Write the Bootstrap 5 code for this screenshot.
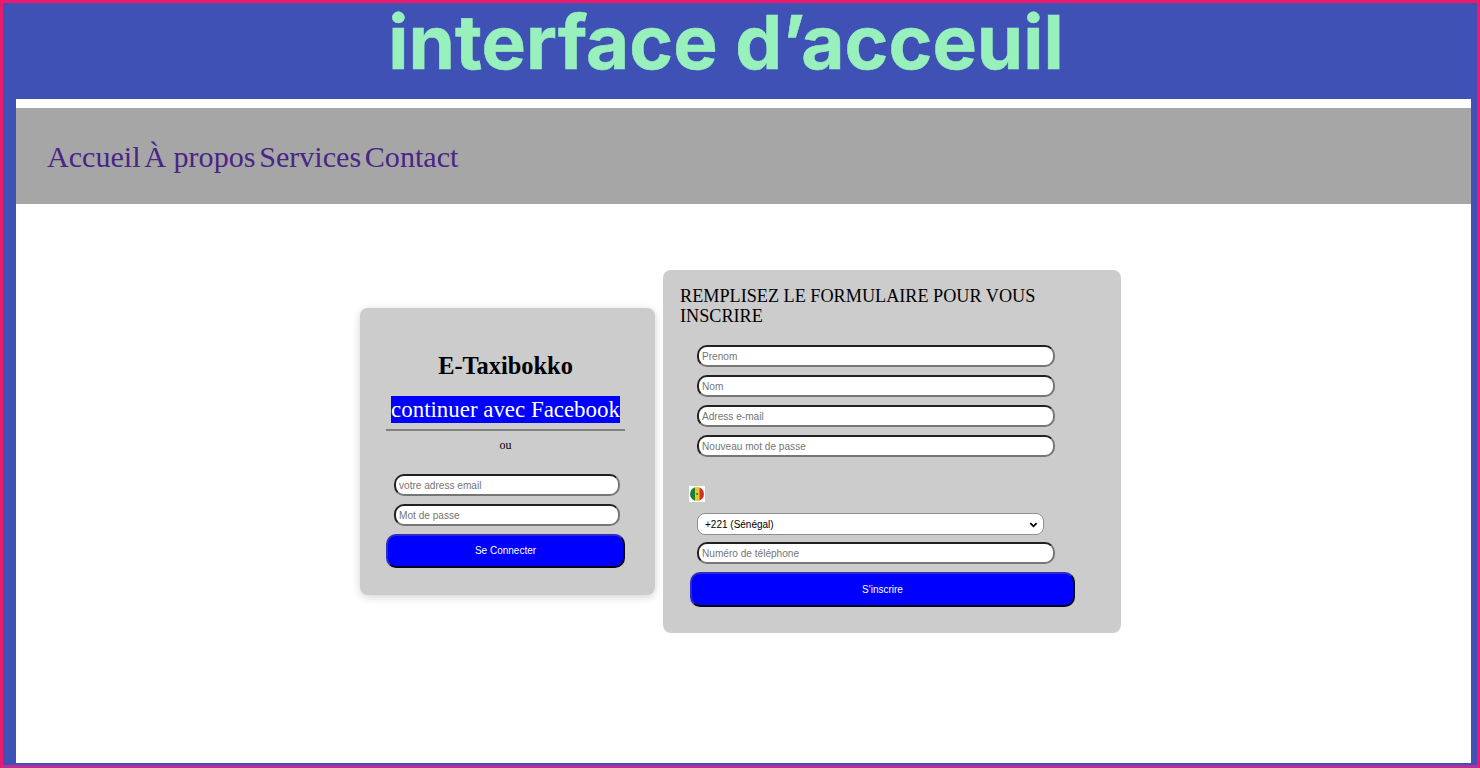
<!DOCTYPE html>
<html lang="fr">
<head>
<meta charset="utf-8">
<title>interface d'acceuil</title>
<link href="https://cdn.jsdelivr.net/npm/bootstrap@5.3.0/dist/css/bootstrap.min.css" rel="stylesheet">
<style>
html,body{height:100%;overflow:hidden}
body{background:#3f51b5;font-family:"Liberation Serif",serif;color:#000}
.frame{height:768px;border:3px solid #ec1a6c;border-bottom-color:#b92f93;padding-left:13px;padding-right:6px;padding-bottom:2px;background:#3f51b5;display:flex;flex-direction:column}
.frame-title{height:96px;margin:0 0 0 -13px;padding-right:22px;padding-top:1px;text-align:center;font-family:Inter,sans-serif;font-weight:700;font-size:74.6px;line-height:90px;margin-top:-7px;height:103px;color:#98f0bd;-webkit-text-stroke:.5px #98f0bd}
.page-area{flex:1;background:#fff;padding-top:9px;display:flex;flex-direction:column}
.menu-bar{height:96px;background:#a6a6a6;padding-left:31px;padding-top:2px;gap:3.7px}
.menu-bar a{font-size:30.1px;color:#4a2585;text-decoration:none;padding:0;line-height:1}
.stage{flex:1;padding-right:6px;padding-bottom:64px;gap:8px}
.panel{background:#ccc;border-radius:8px}
.panel-login{width:295px;height:287px;padding:42px 30px 0 26px;box-shadow:0 2px 8px rgba(0,0,0,.18);flex:none}
.panel-signup{width:458px;height:363px;padding:16px 17px 0 17px;flex:none}
.brand{font-size:24.4px;font-weight:700;line-height:32px;margin:0 0 14px;text-align:center}
.fb-line{text-align:center;font-size:22.9px;line-height:27px;color:#fff;margin:0 -5px;white-space:nowrap}
.fb-line span{background:#00f;padding:1px 0}
.sep{border:0;border-top:2px solid #808080;opacity:1;margin:6px 0 6px}
.or-line{font-size:12px;line-height:16px;text-align:center;margin:0 0 21px}
.signup-title{font-size:18.2px;line-height:20px;font-weight:400;margin:0 0 19px;width:400px}
.field{display:block;height:22px;border:2px inset #767676;border-radius:10px;background:#fff;font-family:"Liberation Sans",sans-serif;font-size:10.1px;padding:0 3px;margin-bottom:8px;outline:0}
.field::placeholder{color:#757575;opacity:1}
.panel-login .field{width:226px;margin-left:8px}
.panel-signup .field{width:358px;margin-left:17px}
.go{display:block;height:34px;border:2px outset #1a1a70;border-radius:10px;background:#00f;color:#fff;font-family:"Liberation Sans",sans-serif;font-size:10px;padding:0 0 1px}
.panel-login .go{width:239px}
.panel-signup .go{width:385px;height:35px;margin-left:10px}
.flag-box{display:block;width:16px;height:16px;margin:29px 0 11px 9px}
.code-select{display:block;width:347px;height:22px;margin:0 0 7px 17px;border:1px solid #8f8f8f;border-radius:8px;appearance:none;background:#fff url("data:image/svg+xml,%3Csvg xmlns='http://www.w3.org/2000/svg' viewBox='0 0 10 10'%3E%3Cpath d='M1.5 3.5 5 7l3.5-3.5' fill='none' stroke='%23000' stroke-width='2'/%3E%3C/svg%3E") no-repeat right 5px center/9px 9px;font-family:"Liberation Sans",sans-serif;font-size:10px;padding:0 0 0 7px;color:#000}
</style>
</head>
<body>
<div class="frame">
  <h1 class="frame-title">interface d’acceuil</h1>
  <div class="page-area">
    <nav class="menu-bar d-flex align-items-center">
      <a href="#">Accueil</a><a href="#">À propos</a><a href="#">Services</a><a href="#">Contact</a>
    </nav>
    <main class="stage d-flex justify-content-center align-items-center">
      <section class="panel panel-login">
        <h2 class="brand">E-Taxibokko</h2>
        <p class="fb-line"><span>continuer avec Facebook</span></p>
        <hr class="sep">
        <p class="or-line">ou</p>
        <input class="field" type="email" placeholder="votre adress email">
        <input class="field" type="password" placeholder="Mot de passe">
        <button class="go" type="button">Se Connecter</button>
      </section>
      <section class="panel panel-signup">
        <h2 class="signup-title">REMPLISEZ LE FORMULAIRE POUR VOUS INSCRIRE</h2>
        <input class="field" type="text" placeholder="Prenom">
        <input class="field" type="text" placeholder="Nom">
        <input class="field" type="email" placeholder="Adress e-mail">
        <input class="field" type="password" placeholder="Nouveau mot de passe">
        <svg class="flag-box" viewBox="0 0 16 16" role="img" aria-label="Sénégal">
          <rect width="16" height="16" fill="#fff"/>
          <clipPath id="rond"><circle cx="8" cy="8" r="7"/></clipPath>
          <g clip-path="url(#rond)">
            <rect x="1" y="1" width="5" height="14" fill="#1f7d3a"/>
            <rect x="6" y="1" width="4.4" height="14" fill="#eac91f"/>
            <rect x="10.4" y="1" width="5" height="14" fill="#d32f2c"/>
            <circle cx="8.2" cy="8" r="1.1" fill="#1f7d3a"/>
          </g>
        </svg>
        <select class="code-select"><option>+221 (Sénégal)</option></select>
        <input class="field" type="tel" placeholder="Numéro de téléphone">
        <button class="go" type="button">S'inscrire</button>
      </section>
    </main>
  </div>
</div>
<script src="https://cdn.jsdelivr.net/npm/bootstrap@5.3.0/dist/js/bootstrap.bundle.min.js"></script>
</body>
</html>
